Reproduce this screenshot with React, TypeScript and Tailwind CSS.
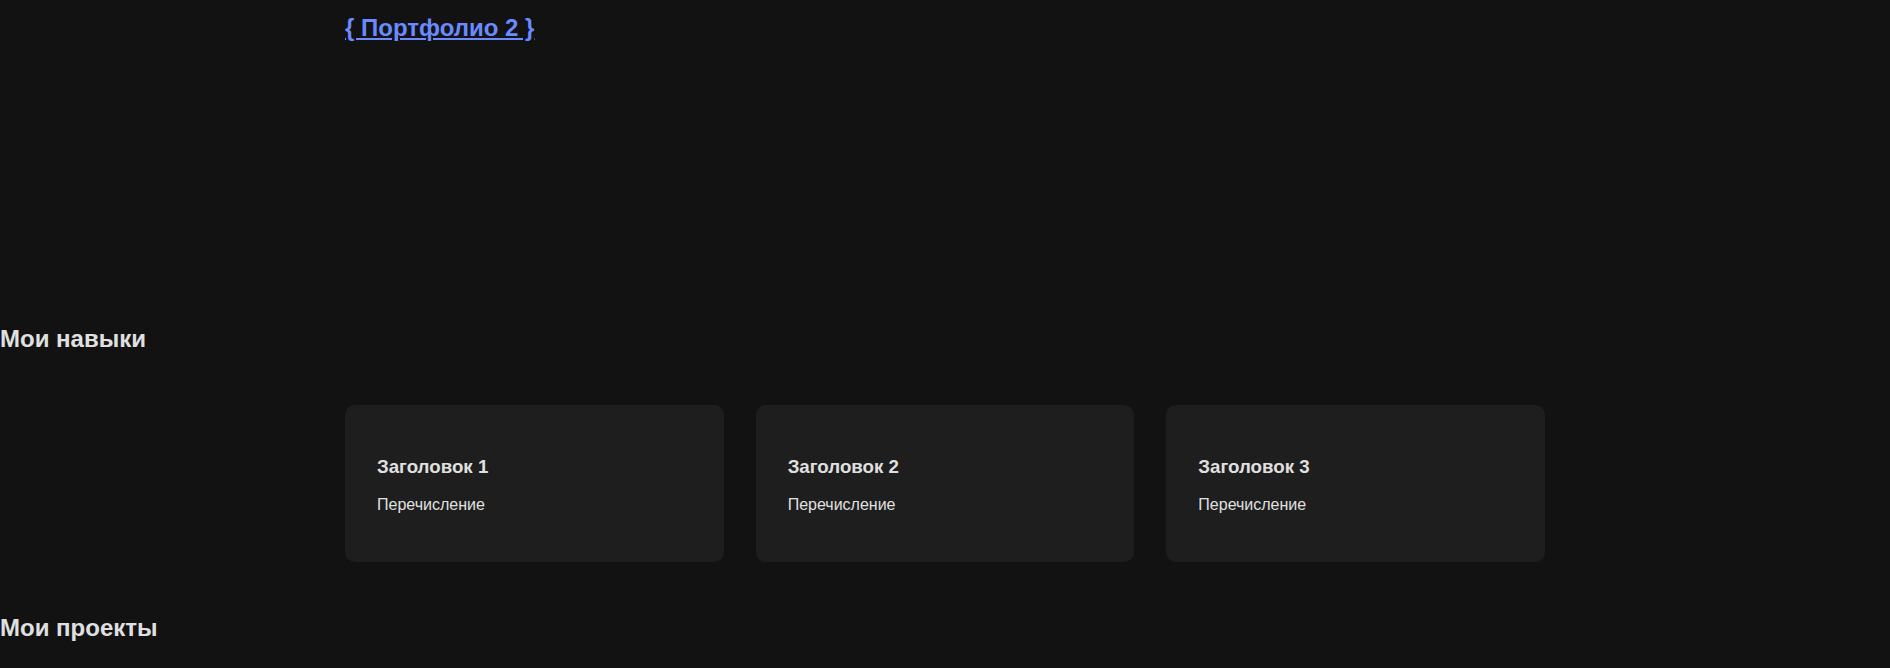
import React from 'react';

const skills = [
  { title: 'Заголовок 1', text: 'Перечисление' },
  { title: 'Заголовок 2', text: 'Перечисление' },
  { title: 'Заголовок 3', text: 'Перечисление' },
];

export default function App() {
  return (
    <div className="min-h-screen bg-[#121212] text-[#e0e0e0] font-['Liberation_Sans',Arial,sans-serif] flow-root">
      {/* Header */}
      <header className="mx-auto mt-[14px] w-[1200px] text-[24px] leading-[28px] font-bold">
        <a href="#" className="text-[#6a8bff] underline">
          {'{ Портфолио 2 }'}
        </a>
      </header>

      {/* Hero (empty) */}
      <section className="h-[263px]" />

      {/* Skills */}
      <section>
        <h2 className="my-[19.92px] text-[24px] leading-[28px] font-bold">Мои навыки</h2>
        <div className="mx-auto grid w-[1200px] grid-cols-3 gap-8 py-8">
          {skills.map((s) => (
            <div key={s.title} className="flow-root rounded-[10px] bg-[#1e1e1e] px-8 py-8">
              <h3 className="my-[18.72px] text-[18.72px] leading-[22px] font-bold">{s.title}</h3>
              <p className="my-4 text-base leading-[18px]">{s.text}</p>
            </div>
          ))}
        </div>
      </section>

      {/* Projects */}
      <section>
        <h2 className="my-[19.92px] text-[24px] leading-[28px] font-bold">Мои проекты</h2>
      </section>
    </div>
  );
}
